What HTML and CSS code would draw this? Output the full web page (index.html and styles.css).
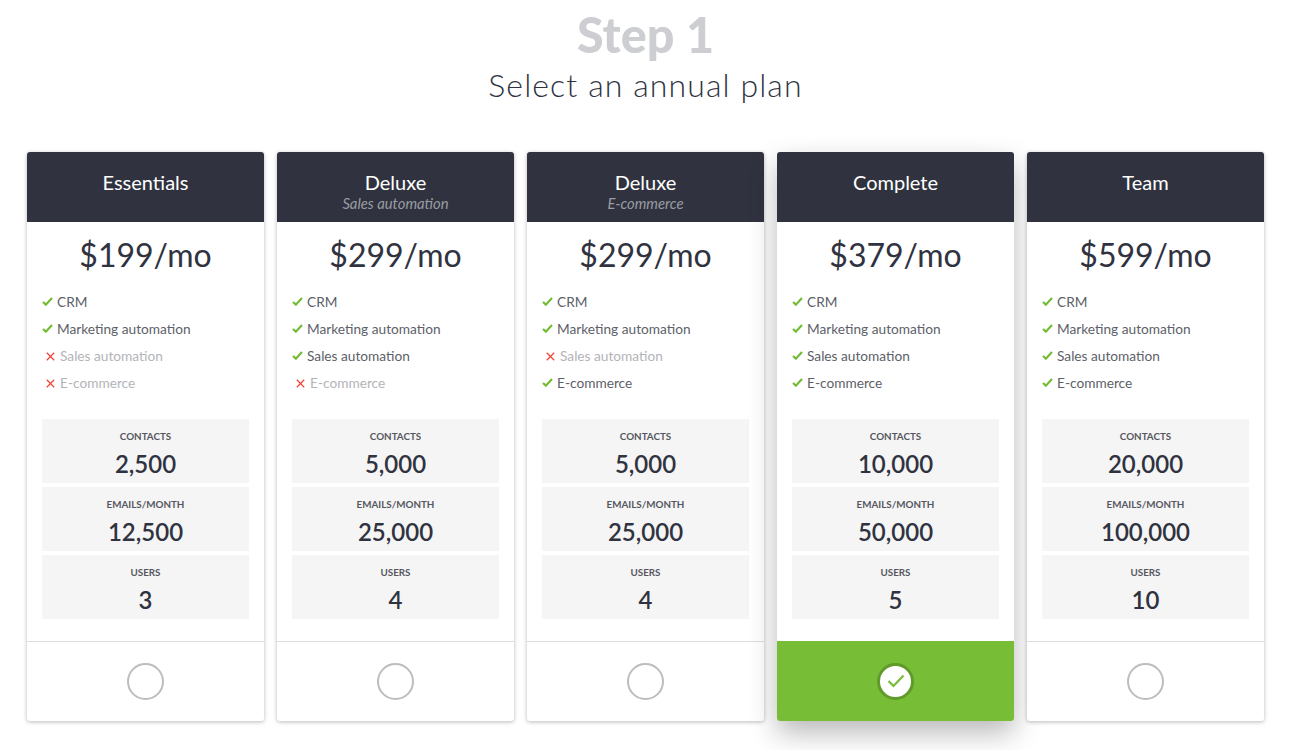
FILE: index.html
```html
<!DOCTYPE html>
<html>

	<head>
		<meta charset="UTF-8">
		<title>Select an annual plan</title>
		<link rel="stylesheet" href="styles.css">
	</head>

	<body>
		<div id="outer">
			<div class="stepTitle">Step 1</div>
			<div class="stepSub">Select an annual plan</div>

			<div id="plans">
				<div class="plan">
					<div class="planHead">
						<div class="planName">Essentials</div>
					</div>
					<div class="planBody">
						<div class="price">$199/mo</div>
						<ul class="feats">
							<li><svg class="ico" viewBox="0 0 12 10"><path d="M1 5.500 4.200 8.500 11 1.200"/></svg>CRM</li>
							<li><svg class="ico" viewBox="0 0 12 10"><path d="M1 5.500 4.200 8.500 11 1.200"/></svg>Marketing automation</li>
							<li class="off"><svg class="icoX" viewBox="0 0 8 8"><path d="M.7.7 7.300 7.300M7.300.7.7 7.300"/></svg>Sales automation</li>
							<li class="off"><svg class="icoX" viewBox="0 0 8 8"><path d="M.7.7 7.300 7.300M7.300.7.7 7.300"/></svg>E-commerce</li>
						</ul>
						<div class="stat"><div class="statLabel">CONTACTS</div><div class="statNum">2,500</div></div>
						<div class="stat"><div class="statLabel">EMAILS/MONTH</div><div class="statNum">12,500</div></div>
						<div class="stat"><div class="statLabel">USERS</div><div class="statNum">3</div></div>
					</div>
					<div class="planFoot"><div class="radio"></div></div>
				</div>

				<div class="plan">
					<div class="planHead">
						<div class="planName">Deluxe</div>
						<div class="planNote">Sales automation</div>
					</div>
					<div class="planBody">
						<div class="price">$299/mo</div>
						<ul class="feats">
							<li><svg class="ico" viewBox="0 0 12 10"><path d="M1 5.500 4.200 8.500 11 1.200"/></svg>CRM</li>
							<li><svg class="ico" viewBox="0 0 12 10"><path d="M1 5.500 4.200 8.500 11 1.200"/></svg>Marketing automation</li>
							<li><svg class="ico" viewBox="0 0 12 10"><path d="M1 5.500 4.200 8.500 11 1.200"/></svg>Sales automation</li>
							<li class="off"><svg class="icoX" viewBox="0 0 8 8"><path d="M.7.7 7.300 7.300M7.300.7.7 7.300"/></svg>E-commerce</li>
						</ul>
						<div class="stat"><div class="statLabel">CONTACTS</div><div class="statNum">5,000</div></div>
						<div class="stat"><div class="statLabel">EMAILS/MONTH</div><div class="statNum">25,000</div></div>
						<div class="stat"><div class="statLabel">USERS</div><div class="statNum">4</div></div>
					</div>
					<div class="planFoot"><div class="radio"></div></div>
				</div>

				<div class="plan">
					<div class="planHead">
						<div class="planName">Deluxe</div>
						<div class="planNote">E-commerce</div>
					</div>
					<div class="planBody">
						<div class="price">$299/mo</div>
						<ul class="feats">
							<li><svg class="ico" viewBox="0 0 12 10"><path d="M1 5.500 4.200 8.500 11 1.200"/></svg>CRM</li>
							<li><svg class="ico" viewBox="0 0 12 10"><path d="M1 5.500 4.200 8.500 11 1.200"/></svg>Marketing automation</li>
							<li class="off"><svg class="icoX" viewBox="0 0 8 8"><path d="M.7.7 7.300 7.300M7.300.7.7 7.300"/></svg>Sales automation</li>
							<li><svg class="ico" viewBox="0 0 12 10"><path d="M1 5.500 4.200 8.500 11 1.200"/></svg>E-commerce</li>
						</ul>
						<div class="stat"><div class="statLabel">CONTACTS</div><div class="statNum">5,000</div></div>
						<div class="stat"><div class="statLabel">EMAILS/MONTH</div><div class="statNum">25,000</div></div>
						<div class="stat"><div class="statLabel">USERS</div><div class="statNum">4</div></div>
					</div>
					<div class="planFoot"><div class="radio"></div></div>
				</div>

				<div class="plan selected">
					<div class="planHead">
						<div class="planName">Complete</div>
					</div>
					<div class="planBody">
						<div class="price">$379/mo</div>
						<ul class="feats">
							<li><svg class="ico" viewBox="0 0 12 10"><path d="M1 5.500 4.200 8.500 11 1.200"/></svg>CRM</li>
							<li><svg class="ico" viewBox="0 0 12 10"><path d="M1 5.500 4.200 8.500 11 1.200"/></svg>Marketing automation</li>
							<li><svg class="ico" viewBox="0 0 12 10"><path d="M1 5.500 4.200 8.500 11 1.200"/></svg>Sales automation</li>
							<li><svg class="ico" viewBox="0 0 12 10"><path d="M1 5.500 4.200 8.500 11 1.200"/></svg>E-commerce</li>
						</ul>
						<div class="stat"><div class="statLabel">CONTACTS</div><div class="statNum">10,000</div></div>
						<div class="stat"><div class="statLabel">EMAILS/MONTH</div><div class="statNum">50,000</div></div>
						<div class="stat"><div class="statLabel">USERS</div><div class="statNum">5</div></div>
					</div>
					<div class="planFoot">
						<div class="radio"><svg class="radioTick" viewBox="0 0 18 14"><path d="M1.500 7 6.500 12 16.500 1.500"/></svg></div>
					</div>
				</div>

				<div class="plan">
					<div class="planHead">
						<div class="planName">Team</div>
					</div>
					<div class="planBody">
						<div class="price">$599/mo</div>
						<ul class="feats">
							<li><svg class="ico" viewBox="0 0 12 10"><path d="M1 5.500 4.200 8.500 11 1.200"/></svg>CRM</li>
							<li><svg class="ico" viewBox="0 0 12 10"><path d="M1 5.500 4.200 8.500 11 1.200"/></svg>Marketing automation</li>
							<li><svg class="ico" viewBox="0 0 12 10"><path d="M1 5.500 4.200 8.500 11 1.200"/></svg>Sales automation</li>
							<li><svg class="ico" viewBox="0 0 12 10"><path d="M1 5.500 4.200 8.500 11 1.200"/></svg>E-commerce</li>
						</ul>
						<div class="stat"><div class="statLabel">CONTACTS</div><div class="statNum">20,000</div></div>
						<div class="stat"><div class="statLabel">EMAILS/MONTH</div><div class="statNum">100,000</div></div>
						<div class="stat"><div class="statLabel">USERS</div><div class="statNum">10</div></div>
					</div>
					<div class="planFoot"><div class="radio"></div></div>
				</div>
			</div>
		</div>
	</body>

</html>
```

FILE: styles.css
```css
html, body {
	height: 750px;
	overflow: hidden;
}

body {
	background: #fff;
	margin: 0;
	color: #30333f;
	font-family: "Lato", "Open Sans", sans-serif;
}

#outer {
	width: 1237px;
	margin-left: 27px;
}

.stepTitle {
	height: 46px;
	padding-top: 11px;
	text-align: center;
	font-size: 48.5px;
	line-height: 46px;
	font-weight: 900;
	color: #cdced1;
}

.stepSub {
	height: 95px;
	padding-top: 9px;
	box-sizing: border-box;
	text-align: center;
	font-size: 32px;
	line-height: 38px;
	font-weight: 300;
	letter-spacing: 1.1px;
}

#plans {
	display: flex;
	gap: 13px;
}

.plan {
	width: 237px;
	height: 569px;
	border-radius: 3px;
	background: #fff;
	box-shadow: 0 1px 4px rgba(0, 0, 0, .28);
}

.plan.selected {
	box-shadow: 0 12px 28px rgba(0, 0, 0, .28);
}

.planHead {
	height: 70px;
	box-sizing: border-box;
	padding-top: 18px;
	border-radius: 3px 3px 0 0;
	background: #30333f;
	text-align: center;
	color: #fff;
}

.planName {
	font-size: 20px;
	line-height: 24px;
}

.planNote {
	margin-top: 1px;
	font-size: 14.8px;
	line-height: 16px;
	font-style: italic;
	color: #9a9ca3;
}

.planBody {
	height: 419px;
	box-sizing: border-box;
	padding: 0 15px;
}

.price {
	height: 66px;
	text-align: center;
	font-size: 32px;
	line-height: 65px;
}

.feats {
	height: 131px;
	margin: 0;
	padding: 0;
	list-style: none;
}

.feats li {
	display: flex;
	align-items: center;
	height: 27px;
	font-size: 13.7px;
	color: #5d5f69;
}

.feats li.off {
	color: #b3b4b8;
}

.ico {
	width: 11px;
	height: 9px;
	margin-right: 4px;
	fill: none;
	stroke: #72bb33;
	stroke-width: 2.4;
}

.icoX {
	width: 9px;
	height: 9px;
	margin: 1px 5px 0 4px;
	fill: none;
	stroke: #f0433a;
	stroke-width: 1.1;
}

.stat {
	height: 64px;
	margin-bottom: 4px;
	background: #f5f5f5;
	text-align: center;
}

.statLabel {
	padding-top: 10px;
	font-size: 9.8px;
	line-height: 14px;
	font-weight: 700;
	color: #55575f;
}

.statNum {
	margin-top: 5px;
	font-size: 24px;
	line-height: 32px;
	font-weight: 600;
}

.planFoot {
	display: flex;
	align-items: center;
	justify-content: center;
	height: 80px;
	box-sizing: border-box;
	border-top: 1px solid #dcdcdc;
	border-radius: 0 0 3px 3px;
}

.radio {
	display: flex;
	align-items: center;
	justify-content: center;
	width: 37px;
	height: 37px;
	box-sizing: border-box;
	border: 2px solid #bdbdbd;
	border-radius: 50%;
	background: #fff;
}

.selected .planFoot {
	border-top: 0;
	background: #78bd36;
}

.selected .radio {
	border: 3px solid #5f9a2b;
}

.radioTick {
	width: 18px;
	height: 14px;
	fill: none;
	stroke: #78bd36;
	stroke-width: 2.2;
}
```
